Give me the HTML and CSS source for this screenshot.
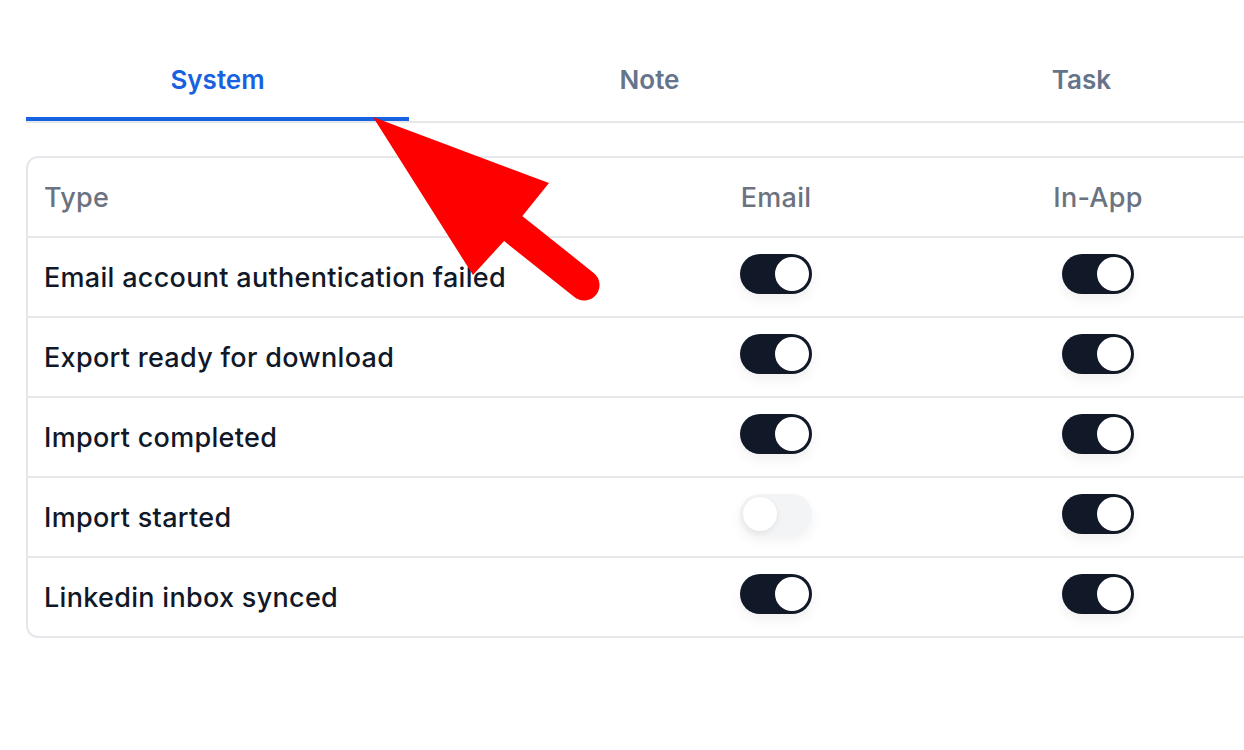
FILE: index.html
```html
<!DOCTYPE html>
<html>
<head>
<meta charset="utf-8">
<link rel="stylesheet" href="styles.css">
</head>
<body>
<div class="page">
  <div class="tabs">
    <div class="tab active">System</div>
    <div class="tab">Note</div>
    <div class="tab">Task</div>
  </div>
  <div class="card">
    <div class="row head">
      <div class="cell type">Type</div>
      <div class="cell center">Email</div>
      <div class="cell center">In-App</div>
    </div>
    <div class="row">
      <div class="cell type">Email account authentication failed</div>
      <div class="cell center"><span class="toggle on"><span class="knob"></span></span></div>
      <div class="cell center"><span class="toggle on"><span class="knob"></span></span></div>
    </div>
    <div class="row">
      <div class="cell type">Export ready for download</div>
      <div class="cell center"><span class="toggle on"><span class="knob"></span></span></div>
      <div class="cell center"><span class="toggle on"><span class="knob"></span></span></div>
    </div>
    <div class="row">
      <div class="cell type">Import completed</div>
      <div class="cell center"><span class="toggle on"><span class="knob"></span></span></div>
      <div class="cell center"><span class="toggle on"><span class="knob"></span></span></div>
    </div>
    <div class="row">
      <div class="cell type">Import started</div>
      <div class="cell center"><span class="toggle off"><span class="knob"></span></span></div>
      <div class="cell center"><span class="toggle on"><span class="knob"></span></span></div>
    </div>
    <div class="row last">
      <div class="cell type">Linkedin inbox synced</div>
      <div class="cell center"><span class="toggle on"><span class="knob"></span></span></div>
      <div class="cell center"><span class="toggle on"><span class="knob"></span></span></div>
    </div>
  </div>
</div>
<svg class="arrow" width="1244" height="750" viewBox="0 0 1244 750">
  <polygon points="373,117 549,183 520,219 505,240 473,275" fill="#ff0000"/>
  <line x1="505" y1="222" x2="584" y2="285" stroke="#ff0000" stroke-width="31" stroke-linecap="round"/>
</svg>
</body>
</html>
```
FILE: styles.css
```css
html, body {
  margin: 0;
  padding: 0;
  background: #ffffff;
  overflow: hidden;
}
body {
  width: 1244px;
  height: 750px;
  font-family: Inter, "Noto Sans", "Liberation Sans", sans-serif;
  position: relative;
}
.page {
  padding: 40px 0 0 26px;
  width: 1300px;
}
.tabs {
  display: flex;
  gap: 49px;
  border-bottom: 2px solid #e5e7eb;
}
.tab {
  width: 383px;
  display: flex;
  align-items: center;
  justify-content: center;
  padding-top: 2px;
  box-sizing: border-box;
  font-size: 26px;
  font-weight: 600;
  color: #64748b;
  border-bottom: 4px solid transparent;
  height: 81px;
}
.tab.active {
  color: #1762e0;
  border-bottom-color: #1762e0;
}
.card {
  margin-top: 33px;
  width: 1233px;
  border: 2px solid #e5e7eb;
  border-radius: 12px;
}
.row {
  display: grid;
  grid-template-columns: 587px 322px 322px;
  height: 80px;
  border-bottom: 2px solid #e5e7eb;
  box-sizing: border-box;
}
.row.last {
  border-bottom: none;
  height: 78px;
}
.cell {
  display: flex;
  align-items: center;
  font-size: 27px;
  letter-spacing: 0.3px;
  font-weight: 500;
  color: #111827;
}
.cell.type {
  padding-left: 16px;
}
.head .cell {
  color: #6b7280;
}
.cell.center {
  justify-content: center;
}
.toggle {
  width: 72px;
  height: 40px;
  border-radius: 20px;
  box-sizing: border-box;
  padding: 3px;
  display: flex;
  margin-bottom: 6px;
  box-shadow: 0 6px 12px rgba(0,0,0,0.06);
}
.toggle.on {
  background: #111827;
  justify-content: flex-end;
}
.toggle.off {
  background: #f3f4f6;
  justify-content: flex-start;
}
.knob {
  width: 34px;
  height: 34px;
  border-radius: 50%;
  background: #ffffff;
}
.toggle.off .knob {
  box-shadow: 0 2px 6px rgba(0,0,0,0.08);
}
.arrow {
  position: absolute;
  left: 0;
  top: 0;
  pointer-events: none;
}
```
